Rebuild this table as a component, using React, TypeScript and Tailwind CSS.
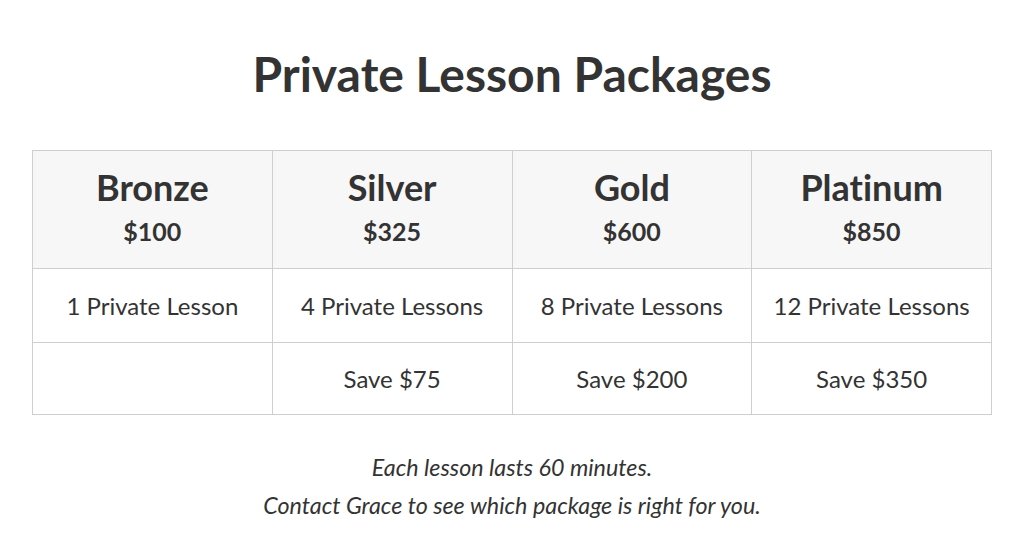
import React from 'react';

const packages = [
  { name: 'Bronze', price: '$100', lessons: '1 Private Lesson', save: '' },
  { name: 'Silver', price: '$325', lessons: '4 Private Lessons', save: 'Save $75' },
  { name: 'Gold', price: '$600', lessons: '8 Private Lessons', save: 'Save $200' },
  { name: 'Platinum', price: '$850', lessons: '12 Private Lessons', save: 'Save $350' },
];

const App: React.FC = () => {
  return (
    <div className="min-h-[557px] bg-white text-[#333] [font-variant-ligatures:none] font-['Lato','Liberation_Sans',sans-serif]">
      <h1 className="pt-[44px] text-center text-[48px] font-bold leading-[60px]">
        Private Lesson Packages
      </h1>

      <table className="mx-auto mt-[46px] w-[960px] table-fixed border-collapse">
        <thead>
          <tr className="h-[118px] bg-[#f7f7f7]">
            {packages.map((p) => (
              <th key={p.name} className="border border-[#cfcfcf] pb-[8px] text-center align-middle">
                <div className="text-[36px] font-bold leading-[44px]">{p.name}</div>
                <div className="mt-[6px] text-[25px] font-bold leading-[32px]">{p.price}</div>
              </th>
            ))}
          </tr>
        </thead>
        <tbody>
          <tr className="h-[74px]">
            {packages.map((p) => (
              <td key={p.name} className="border border-[#cfcfcf] text-center text-[24px]">
                {p.lessons}
              </td>
            ))}
          </tr>
          <tr className="h-[72px]">
            {packages.map((p) => (
              <td key={p.name} className="border border-[#cfcfcf] text-center text-[24px]">
                {p.save}
              </td>
            ))}
          </tr>
        </tbody>
      </table>

      <div className="mt-[33px] text-center text-[23.3px] italic leading-[38px]">
        <p>Each lesson lasts 60 minutes.</p>
        <p>Contact Grace to see which package is right for you.</p>
      </div>
    </div>
  );
};

export default App;
